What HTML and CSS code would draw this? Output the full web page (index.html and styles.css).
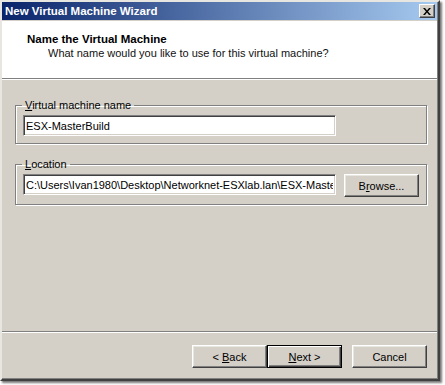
FILE: index.html
```html
<!DOCTYPE html>
<html lang="en">
<head>
    <meta charset="UTF-8">
    <title>New Virtual Machine Wizard</title>
    <link rel="stylesheet" href="styles.css">
</head>
<body>
    <div class="window">
        <div class="titlebar">
            <span class="title">New Virtual Machine Wizard</span>
            <button class="close" aria-label="Close">
                <svg width="8" height="7" viewBox="0 0 8 7">
                    <path d="M0 0h2l2 2.5 2-2.5h2L5 3.5 8 7H6L4 4.5 2 7H0l3-3.5z" fill="#000"/>
                </svg>
            </button>
        </div>

        <div class="header">
            <div class="heading">Name the Virtual Machine</div>
            <div class="subheading">What name would you like to use for this virtual machine?</div>
        </div>

        <div class="body">
            <fieldset class="group">
                <legend><u>V</u>irtual machine name</legend>
                <input class="field field-name" type="text" value="ESX-MasterBuild">
            </fieldset>

            <fieldset class="group">
                <legend><u>L</u>ocation</legend>
                <div class="row">
                    <input class="field field-path" type="text" value="C:\Users\Ivan1980\Desktop\Networknet-ESXlab.lan\ESX-MasterBuild">
                    <button class="btn">B<u>r</u>owse...</button>
                </div>
            </fieldset>
        </div>

        <div class="footer">
            <button class="btn">&lt; <u>B</u>ack</button>
            <button class="btn default"><u>N</u>ext &gt;</button>
            <button class="btn cancel">Cancel</button>
        </div>
    </div>
</body>
</html>
```

FILE: styles.css
```css
body {
    margin: 0;
    width: 445px;
    height: 385px;
    background: #fff;
    font-family: "Liberation Sans", Arial, sans-serif;
    font-size: 11px;
    color: #000;
    overflow: hidden;
}
.window {
    box-sizing: border-box;
    width: 440px;
    height: 381px;
    display: flex;
    flex-direction: column;
    background: #d4d0c8;
    border: 2px solid;
    border-color: #e8e6e1 #404040 #404040 #e8e6e1;
    box-shadow: inset -1px -1px #808080, 2px 2px 2px #777;
}
.titlebar {
    height: 18px;
    flex-shrink: 0;
    display: flex;
    align-items: center;
    justify-content: space-between;
    padding: 0 2px 0 3px;
    margin-right: 1px;
    background: linear-gradient(to right, #0a246a, #a6caf0);
}
.title {
    color: #fff;
    font-weight: bold;
    font-size: 11.5px;
}
.close {
    box-sizing: border-box;
    width: 16px;
    height: 14px;
    padding: 0;
    display: flex;
    align-items: center;
    justify-content: center;
    background: #d4d0c8;
    border: 1px solid;
    border-color: #fff #404040 #404040 #fff;
    box-shadow: inset -1px -1px #808080;
}
.header {
    height: 58px;
    flex-shrink: 0;
    margin-top: 1px;
    margin-right: 1px;
    background: #fff;
    border-bottom: 1px solid #808080;
    box-shadow: 0 1px #fff;
    box-sizing: border-box;
    padding: 12px 0 0 25px;
}
.heading {
    font-weight: bold;
    font-size: 11.5px;
}
.subheading {
    margin-top: 2px;
    padding-left: 21px;
    color: #111;
}
.body {
    flex: 1;
    padding: 20px 11px 0 13px;
}
.group {
    margin: 0 0 14px;
    padding: 4px 7px 7px 7px;
    border: 1px solid #808080;
    box-shadow: inset 1px 1px #fff, 1px 1px #fff;
}
.group legend {
    padding: 0 3px;
    margin-left: -1px;
}
.field {
    box-sizing: border-box;
    height: 21px;
    width: 313px;
    padding: 0 2px;
    font-family: "Liberation Sans", Arial, sans-serif;
    font-size: 11px;
    color: #000;
    background: #fff;
    border: 1px solid;
    border-color: #808080 #fff #fff #808080;
    box-shadow: inset 1px 1px #404040, inset -1px -1px #d4d0c8;
    outline: none;
}
.row {
    display: flex;
    gap: 8px;
}
.btn {
    box-sizing: border-box;
    width: 75px;
    height: 23px;
    padding: 0;
    font-family: "Liberation Sans", Arial, sans-serif;
    font-size: 11px;
    color: #000;
    background: #d4d0c8;
    border: 1px solid;
    border-color: #fff #404040 #404040 #fff;
    box-shadow: inset -1px -1px #808080, inset 1px 1px #e8e6e1;
}
.btn.default {
    border: 1px solid #000;
    box-shadow: inset 1px 1px #fff, inset -1px -1px #404040, inset -2px -2px #808080;
}
.footer {
    box-sizing: border-box;
    height: 48px;
    flex-shrink: 0;
    display: flex;
    align-items: flex-start;
    padding: 13px 0 0 190px;
    border-top: 1px solid #808080;
    box-shadow: inset 0 1px #fff;
    margin-right: 1px;
}
.footer .cancel {
    margin-left: 10px;
}
```
